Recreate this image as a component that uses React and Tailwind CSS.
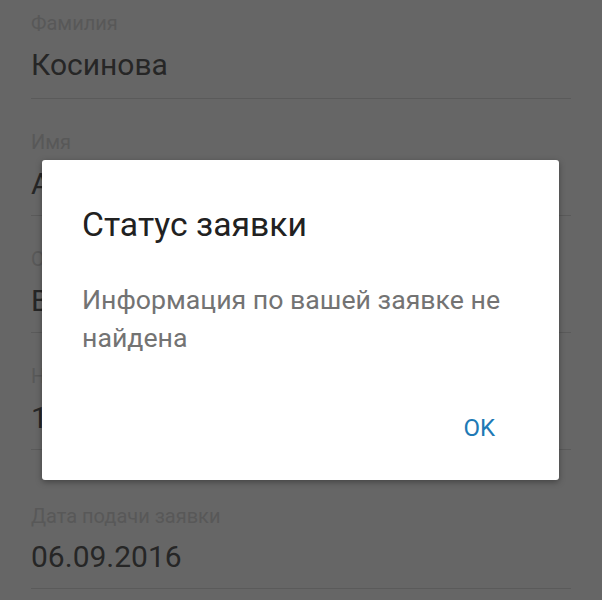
export default function App() {
  const font = { fontFamily: 'Roboto, "Noto Sans", sans-serif' };
  return (
    <div className="relative w-[602px] h-[600px] overflow-hidden bg-[#666666]" style={font}>
      <div className="px-[31px]">
        <div className="pt-[11px] pb-[15px] border-b border-[#5a5a5a]">
          <div className="text-[20px] leading-[24px] text-[#585858]">Фамилия</div>
          <div className="mt-[12px] text-[30px] leading-[36px] text-[#262626]">Косинова</div>
        </div>
        <div className="pt-[31px] pb-[13px] border-b border-[#5a5a5a]">
          <div className="text-[20px] leading-[24px] text-[#585858]">Имя</div>
          <div className="mt-[12px] text-[30px] leading-[36px] text-[#262626]">Анна</div>
        </div>
        <div className="pt-[31px] pb-[13px] border-b border-[#5a5a5a]">
          <div className="text-[20px] leading-[24px] text-[#585858]">Отчество</div>
          <div className="mt-[12px] text-[30px] leading-[36px] text-[#262626]">Викторовна</div>
        </div>
        <div className="pt-[31px] pb-[13px] border-b border-[#5a5a5a]">
          <div className="text-[20px] leading-[24px] text-[#585858]">Номер заявки</div>
          <div className="mt-[12px] text-[30px] leading-[36px] text-[#262626]">1024587</div>
        </div>
        <div className="pt-[54px] pb-[13px] border-b border-[#5a5a5a]">
          <div className="text-[20px] leading-[24px] text-[#585858]">Дата подачи заявки</div>
          <div className="mt-[11px] text-[30px] leading-[36px] text-[#262626]">06.09.2016</div>
        </div>
      </div>

      <div className="absolute left-[42px] top-[160px] w-[517px] h-[320px] bg-white rounded-[3px] shadow-[0_2px_6px_rgba(0,0,0,0.35)] flex flex-col">
        <div className="pt-[45px] pl-[40px] text-[33.7px] leading-[40px] text-[#212121]">Статус заявки</div>
        <div className="mt-[36px] pl-[40px] pr-[40px] text-[26.7px] leading-[38px] text-[#737373]">
          Информация по вашей заявке не найдена
        </div>
        <div className="mt-auto flex justify-end pr-[64px] pb-[38px]">
          <span className="text-[24px] leading-[28px] text-[#2079b5]">OK</span>
        </div>
      </div>
    </div>
  );
}
